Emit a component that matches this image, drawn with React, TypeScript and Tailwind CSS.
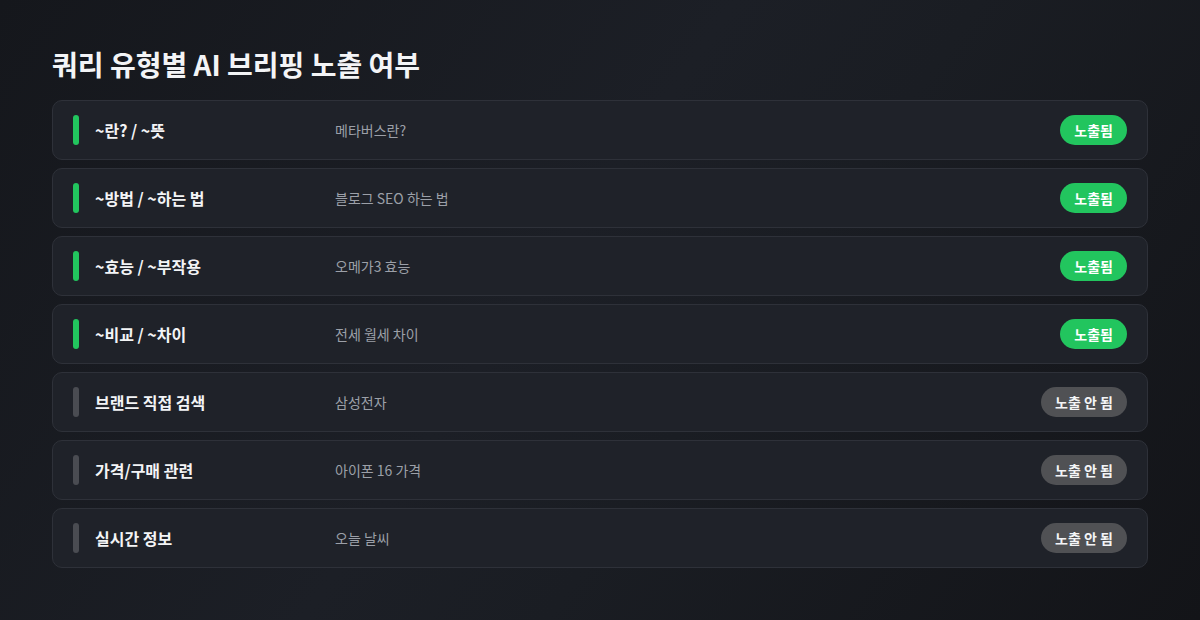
const ROWS = [
  { label: "~란? / ~뜻", example: "메타버스란?", shown: true },
  { label: "~방법 / ~하는 법", example: "블로그 SEO 하는 법", shown: true },
  { label: "~효능 / ~부작용", example: "오메가3 효능", shown: true },
  { label: "~비교 / ~차이", example: "전세 월세 차이", shown: true },
  { label: "브랜드 직접 검색", example: "삼성전자", shown: false },
  { label: "가격/구매 관련", example: "아이폰 16 가격", shown: false },
  { label: "실시간 정보", example: "오늘 날씨", shown: false },
];

export default function App() {
  return (
    <div
      className="h-[620px] w-[1200px] overflow-hidden bg-[linear-gradient(125deg,#15171c_0%,#1c1f26_45%,#1a1d23_60%,#131418_100%)] px-[52px] pt-[44px]"
      style={{ fontFamily: '"Noto Sans CJK KR", "Noto Sans", sans-serif' }}
    >
      <h1 className="text-[28px] font-bold leading-[40px] text-[#f3f4f6]">쿼리 유형별 AI 브리핑 노출 여부</h1>
      <div className="mt-[16px] flex w-[1096px] flex-col gap-2">
        {ROWS.map((r, i) => (
          <div
            key={i}
            className="flex h-[60px] items-center rounded-[10px] border border-[#2e3139] bg-[#1f2229] pl-[20px] pr-[20px]"
          >
            <div className={`h-[30px] w-[6px] rounded-full ${r.shown ? "bg-[#22c55e]" : "bg-[#4a4c52]"}`} />
            <div className="ml-[16px] w-[240px] text-[16px] font-bold text-[#f3f4f6]">{r.label}</div>
            <div className="flex-1 text-[14px] text-[#9ca0a8]">{r.example}</div>
            {r.shown ? (
              <span className="flex h-[30px] items-center rounded-full bg-[#22c55e] px-[14px] text-[14px] font-bold text-white">
                노출됨
              </span>
            ) : (
              <span className="flex h-[30px] items-center rounded-full bg-[#505154] px-[14px] text-[14px] font-bold text-[#f3f4f6]">
                노출 안 됨
              </span>
            )}
          </div>
        ))}
      </div>
    </div>
  );
}
